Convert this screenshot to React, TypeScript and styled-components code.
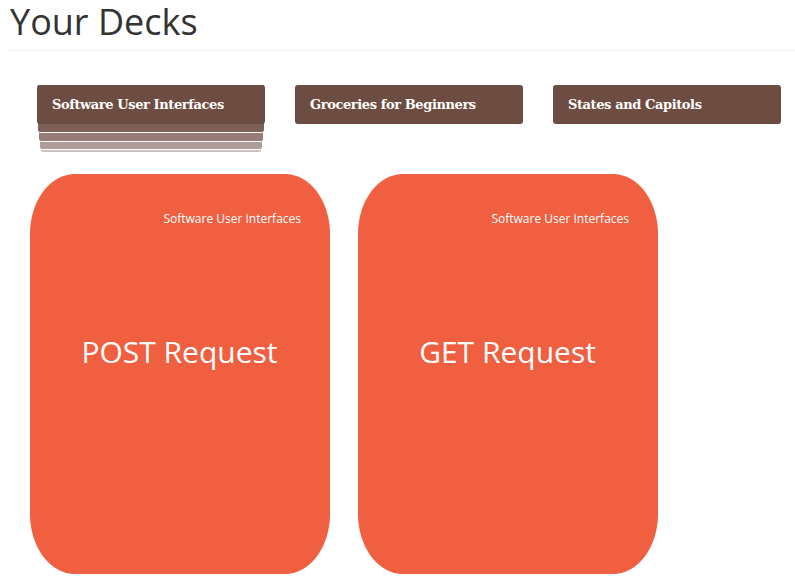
import React from "react";
import styled, { createGlobalStyle } from "styled-components";

const Global = createGlobalStyle`
  html, body { margin: 0; padding: 0; background: #fff; }
  body { font-family: "Open Sans", "Liberation Sans", sans-serif; color: #333; }
`;

const Page = styled.div`
  padding: 0 0 0 8px;
`;

const Header = styled.h1`
  margin: 0;
  padding: 0 0 7px 2px;
  font-size: 36px;
  font-weight: 400;
  line-height: 43px;
  color: #333;
  border-bottom: 1px solid #eee;
`;

const DeckRow = styled.div`
  display: flex;
  gap: 30px;
  padding: 34px 0 0 29px;
  height: 123px;
  box-sizing: border-box;
`;

const DeckWrap = styled.div`
  position: relative;
  width: 228px;
  height: 39px;
`;

const Layer = styled.div<{ $inset: number; $bottom: number; $color: string }>`
  position: absolute;
  left: ${(p) => p.$inset}px;
  right: ${(p) => p.$inset}px;
  top: 0;
  bottom: ${(p) => p.$bottom}px;
  background: ${(p) => p.$color};
  border-bottom: 1px solid #fff;
  border-radius: 0 0 3px 3px;
`;

const Deck = styled.button`
  position: relative;
  width: 100%;
  height: 100%;
  margin: 0;
  padding: 0 0 0 15px;
  border: none;
  border-radius: 3px;
  background: #6d4c41;
  color: #fff;
  text-align: left;
  font-family: "DejaVu Serif", "Liberation Serif", serif;
  font-weight: 700;
  font-size: 13px;
  letter-spacing: -0.4px;
  cursor: pointer;
`;

const CardRow = styled.div`
  display: flex;
  gap: 28px;
  padding-left: 22px;
`;

const Card = styled.div`
  width: 300px;
  height: 400px;
  border-radius: 15%;
  background: #f05f40;
  color: #fff;
  display: flex;
  flex-direction: column;
  box-sizing: border-box;
  padding: 37px 29px 0 28px;
`;

const CardDeck = styled.div`
  align-self: flex-end;
  font-size: 12px;
  line-height: 16px;
`;

const CardTitle = styled.div`
  margin-top: 105px;
  text-align: center;
  font-size: 30px;
  line-height: 40px;
`;

const layers = [
  { inset: 4, bottom: -29, color: "#cdc1bd" },
  { inset: 3, bottom: -26, color: "#b09c96" },
  { inset: 2, bottom: -18, color: "#977d75" },
  { inset: 1, bottom: -9, color: "#7e6057" },
];

const decks = [
  { name: "Software User Interfaces", count: 4 },
  { name: "Groceries for Beginners", count: 0 },
  { name: "States and Capitols", count: 0 },
];

const cards = [
  { deck: "Software User Interfaces", title: "POST Request" },
  { deck: "Software User Interfaces", title: "GET Request" },
];

export default function App() {
  return (
    <Page>
      <Global />
      <Header>Your Decks</Header>
      <DeckRow>
        {decks.map((d) => (
          <DeckWrap key={d.name}>
            {d.count > 0 &&
              layers.map((l, i) => (
                <Layer key={i} $inset={l.inset} $bottom={l.bottom} $color={l.color} />
              ))}
            <Deck>{d.name}</Deck>
          </DeckWrap>
        ))}
      </DeckRow>
      <CardRow>
        {cards.map((c) => (
          <Card key={c.title}>
            <CardDeck>{c.deck}</CardDeck>
            <CardTitle>{c.title}</CardTitle>
          </Card>
        ))}
      </CardRow>
    </Page>
  );
}
